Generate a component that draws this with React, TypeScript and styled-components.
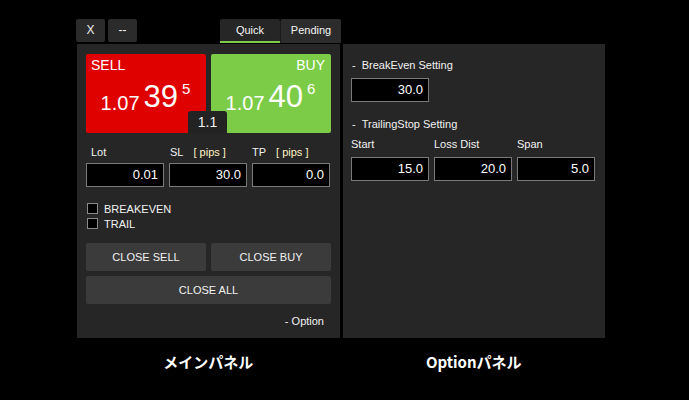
import styled, { createGlobalStyle } from "styled-components";

const GlobalStyle = createGlobalStyle`
  html, body {
    margin: 0;
    background: #000;
  }
  body {
    font-family: "Liberation Sans", Arial, sans-serif;
    color: #f2f2f2;
  }
`;

const App = (): JSX.Element => {
  return (
    <Page>
      <GlobalStyle />
      <TopBar>
        <WindowButtons>
          <TopButton>X</TopButton>
          <TopButton>--</TopButton>
        </WindowButtons>
        <Tabs>
          <Tab $active>Quick</Tab>
          <Tab>Pending</Tab>
        </Tabs>
      </TopBar>
      <Panels>
        <MainPanel>
          <PriceRow>
            <PriceBox $side="sell">
              <PriceLabel $side="sell">SELL</PriceLabel>
              <Price>
                <Big>1.07</Big>
                <Pips>39</Pips>
                <Point>5</Point>
              </Price>
            </PriceBox>
            <PriceBox $side="buy">
              <PriceLabel $side="buy">BUY</PriceLabel>
              <Price>
                <Big>1.07</Big>
                <Pips>40</Pips>
                <Point>6</Point>
              </Price>
            </PriceBox>
            <Spread>1.1</Spread>
          </PriceRow>
          <FieldGrid>
            <FieldLabel $indent={5}>Lot</FieldLabel>
            <FieldLabel $indent={1}>
              SL<Unit>[ pips ]</Unit>
            </FieldLabel>
            <FieldLabel>
              TP<Unit>[ pips ]</Unit>
            </FieldLabel>
            <NumberBox>0.01</NumberBox>
            <NumberBox>30.0</NumberBox>
            <NumberBox>0.0</NumberBox>
          </FieldGrid>
          <Checks>
            <CheckRow>
              <CheckBox />
              BREAKEVEN
            </CheckRow>
            <CheckRow>
              <CheckBox />
              TRAIL
            </CheckRow>
          </Checks>
          <ButtonGrid>
            <ActionButton>CLOSE SELL</ActionButton>
            <ActionButton>CLOSE BUY</ActionButton>
            <ActionButton $wide>CLOSE ALL</ActionButton>
          </ButtonGrid>
          <OptionLink>- Option</OptionLink>
        </MainPanel>
        <OptionPanel>
          <SectionTitle>
            <Dash>-</Dash>BreakEven Setting
          </SectionTitle>
          <FieldGrid $top={5}>
            <NumberBox>30.0</NumberBox>
          </FieldGrid>
          <SectionTitle $top={14}>
            <Dash>-</Dash>TrailingStop Setting
          </SectionTitle>
          <FieldGrid $top={4}>
            <FieldLabel $height={16}>Start</FieldLabel>
            <FieldLabel $height={16}>Loss Dist</FieldLabel>
            <FieldLabel $height={16}>Span</FieldLabel>
            <NumberBox>15.0</NumberBox>
            <NumberBox>20.0</NumberBox>
            <NumberBox>5.0</NumberBox>
          </FieldGrid>
        </OptionPanel>
      </Panels>
      <Captions>
        <Caption>メインパネル</Caption>
        <Caption>Optionパネル</Caption>
      </Captions>
    </Page>
  );
};

export default App;

const Page = styled.div`
  padding: 19px 0 0 77px;
  width: 528px;
`;

const TopBar = styled.div`
  display: flex;
  justify-content: space-between;
  align-items: flex-start;
  width: 265px;
  height: 25px;
  margin-left: -1px;
`;

const WindowButtons = styled.div`
  display: flex;
  gap: 3px;
`;

const TopButton = styled.div`
  width: 29px;
  height: 23px;
  line-height: 23px;
  text-align: center;
  font-size: 12px;
  background: #2b2b2b;
  border-radius: 2px;
  color: #eee;
`;

const Tabs = styled.div`
  display: flex;
`;

const Tab = styled.div<{ $active?: boolean }>`
  width: 60px;
  height: 22px;
  line-height: 22px;
  text-align: center;
  font-size: 11px;
  color: #f4f4f4;
  background: ${(p) => (p.$active ? "#262626" : "#2c2c2c")};
  border-radius: 2px 2px 0 0;
  border-bottom: 2px solid ${(p) => (p.$active ? "#7ccc48" : "transparent")};
  & + & {
    border-left: 1px solid #1a1a1a;
  }
`;

const Panels = styled.div`
  display: flex;
  gap: 3px;
`;

const PanelBase = styled.div`
  background: #262626;
  height: 294px;
  box-sizing: border-box;
  display: flex;
  flex-direction: column;
`;

const MainPanel = styled(PanelBase)`
  width: 263px;
  padding: 10px 9px 0 9px;
`;

const OptionPanel = styled(PanelBase)`
  width: 262px;
  padding: 13px 8px 0 8px;
`;

const PriceRow = styled.div`
  position: relative;
  display: flex;
  gap: 5px;
`;

const PriceBox = styled.div<{ $side: "sell" | "buy" }>`
  width: 120px;
  height: 79px;
  box-sizing: border-box;
  padding: 3px 6px 0 5px;
  border-radius: 2px;
  background: ${(p) => (p.$side === "sell" ? "#df0000" : "#7ccc48")};
  display: flex;
  flex-direction: column;
`;

const PriceLabel = styled.div<{ $side: "sell" | "buy" }>`
  font-size: 14px;
  line-height: 16px;
  color: #fff;
  text-align: ${(p) => (p.$side === "sell" ? "left" : "right")};
`;

const Price = styled.div`
  display: flex;
  justify-content: center;
  align-items: flex-start;
  margin-top: 8px;
  color: #fff;
  height: 36px;
`;

const Big = styled.span`
  font-size: 20px;
  margin-top: 12px;
  line-height: 20px;
`;

const Pips = styled.span`
  font-size: 31px;
  line-height: 32px;
  margin-left: 4px;
`;

const Point = styled.span`
  font-size: 15px;
  line-height: 15px;
  margin-left: 4px;
`;

const Spread = styled.div`
  position: absolute;
  left: 102px;
  bottom: -1px;
  width: 39px;
  height: 23px;
  line-height: 23px;
  text-align: center;
  font-size: 14px;
  background: #232323;
  border-radius: 3px 3px 0 0;
  color: #f0f0f0;
`;

const FieldGrid = styled.div<{ $top?: number }>`
  display: grid;
  grid-template-columns: repeat(3, 78px);
  column-gap: 5px;
  row-gap: ${(p) => (p.$top === undefined ? 2 : 5)}px;
  margin-top: ${(p) => p.$top ?? 10}px;
`;

const FieldLabel = styled.div<{ $indent?: number; $height?: number }>`
  font-size: 11px;
  height: ${(p) => p.$height ?? 18}px;
  line-height: ${(p) => p.$height ?? 18}px;
  padding-left: ${(p) => p.$indent ?? 0}px;
  color: #f2f2f2;
  white-space: nowrap;
`;

const Unit = styled.span`
  color: #fff3c4;
  margin-left: 10px;
`;

const NumberBox = styled.div`
  height: 24px;
  box-sizing: border-box;
  border: 1px solid #7a7a7a;
  background: #000;
  color: #fff;
  font-size: 13px;
  line-height: 22px;
  text-align: right;
  padding-right: 5px;
`;

const Checks = styled.div`
  margin-top: 14px;
  display: flex;
  flex-direction: column;
`;

const CheckRow = styled.div`
  display: flex;
  align-items: center;
  gap: 6px;
  height: 15px;
  font-size: 11px;
  padding-left: 1px;
`;

const CheckBox = styled.span`
  width: 11px;
  height: 11px;
  box-sizing: border-box;
  border: 1px solid #8a8a8a;
  background: #000;
`;

const ButtonGrid = styled.div`
  display: grid;
  grid-template-columns: 120px 120px;
  gap: 5px;
  margin-top: 12px;
`;

const ActionButton = styled.div<{ $wide?: boolean }>`
  grid-column: ${(p) => (p.$wide ? "1 / span 2" : "auto")};
  height: 28px;
  line-height: 28px;
  text-align: center;
  font-size: 11px;
  background: #3b3b3b;
  border-radius: 2px;
  color: #f2f2f2;
`;

const OptionLink = styled.div`
  margin-top: 9px;
  font-size: 11px;
  line-height: 16px;
  text-align: right;
  padding-right: 7px;
`;

const SectionTitle = styled.div<{ $top?: number }>`
  font-size: 11px;
  line-height: 16px;
  margin-top: ${(p) => p.$top ?? 0}px;
  padding-left: 1px;
`;

const Dash = styled.span`
  margin-right: 6px;
`;

const Captions = styled.div`
  display: flex;
  gap: 3px;
  margin-top: 12px;
`;

const Caption = styled.div`
  width: 263px;
  text-align: center;
  font-family: "Noto Sans CJK JP", "Liberation Sans", sans-serif;
  font-weight: bold;
  font-size: 15px;
  line-height: 24px;
  color: #fff;
`;
